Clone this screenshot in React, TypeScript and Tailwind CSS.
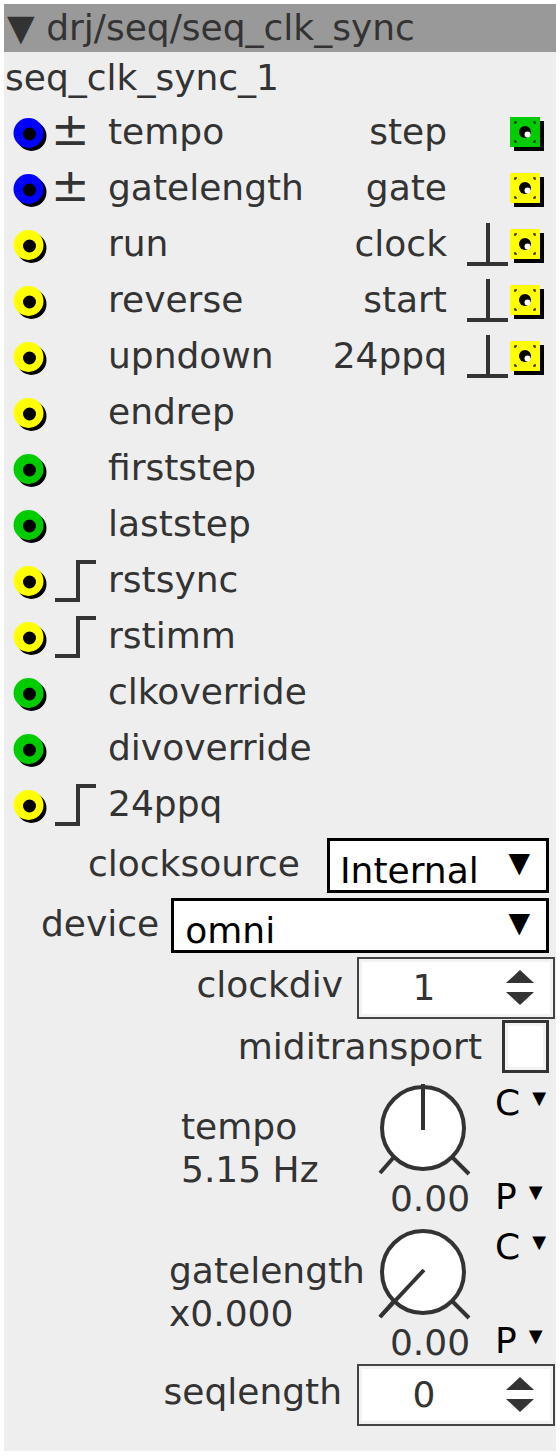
import React from 'react';

const FONT = { fontFamily: '"DejaVu Sans", "Liberation Sans", sans-serif' };

type Color = 'blue' | 'yellow' | 'green';
const fills: Record<Color, string> = { blue: '#0000ff', yellow: '#ffff00', green: '#00cc00' };

function Jack({ color }: { color: Color }) {
    return (
        <svg width="38" height="56" viewBox="0 0 38 56" className="shrink-0">
            <circle cx="19.5" cy="32" r="15" fill="#000" />
            <circle cx="16.5" cy="29" r="15" fill={fills[color]} />
            <circle cx="17.5" cy="30" r="6.5" fill="#000" />
        </svg>
    );
}

function Outlet({ color }: { color: Color }) {
    const c = '#333';
    return (
        <svg width="38" height="56" viewBox="0 0 38 56" className="shrink-0">
            <rect x="6" y="17" width="30" height="30" fill="#000" />
            <rect x="2" y="13" width="30" height="30" fill={fills[color]} />
            <path d="M7 20 v-2 h2 M25 18 h2 v2 M27 36 v2 h-2 M9 38 h-2 v-2" stroke={c} strokeWidth="1.5" fill="none" />
            <circle cx="17" cy="28" r="6" fill="#000" />
            <circle cx="19.5" cy="30.5" r="3" fill="#fff" />
        </svg>
    );
}

function StepIcon() {
    return (
        <svg width="58" height="56" viewBox="0 0 58 56" className="shrink-0">
            <path d="M5 48 H28 V10 H46" stroke="#333" strokeWidth="4" fill="none" />
        </svg>
    );
}

function EdgeIcon() {
    return (
        <svg width="63" height="56" viewBox="0 0 63 56" className="shrink-0">
            <path d="M41 7 V48 M20 48 H61" stroke="#333" strokeWidth="4" fill="none" />
        </svg>
    );
}

type Inlet = { color: Color; sym?: 'pm' | 'step'; label: string };
type Out = { color: Color; edge?: boolean; label: string };

const inlets: Inlet[] = [
    { color: 'blue', sym: 'pm', label: 'tempo' },
    { color: 'blue', sym: 'pm', label: 'gatelength' },
    { color: 'yellow', label: 'run' },
    { color: 'yellow', label: 'reverse' },
    { color: 'yellow', label: 'upndown' },
    { color: 'yellow', label: 'endrep' },
    { color: 'green', label: 'firststep' },
    { color: 'green', label: 'laststep' },
    { color: 'yellow', sym: 'step', label: 'rstsync' },
    { color: 'yellow', sym: 'step', label: 'rstimm' },
    { color: 'green', label: 'clkoverride' },
    { color: 'green', label: 'divoverride' },
    { color: 'yellow', sym: 'step', label: '24ppq' },
];

const outlets: Out[] = [
    { color: 'green', label: 'step' },
    { color: 'yellow', label: 'gate' },
    { color: 'yellow', edge: true, label: 'clock' },
    { color: 'yellow', edge: true, label: 'start' },
    { color: 'yellow', edge: true, label: '24ppq' },
];

function Spinner({ value }: { value: string }) {
    return (
        <div className="w-[198px] h-[62px] border-2 border-[#444] bg-[#f2f2f2] p-[3px]">
            <div className="w-full h-full bg-white flex items-center">
                <span className="w-[124px] text-center text-[36px] leading-none text-[#333]">{value}</span>
                <svg width="40" height="44" viewBox="0 0 40 44" className="ml-[14px]">
                    <path d="M6 17 L20 4 L34 17 Z" fill="#333" />
                    <path d="M6 26 L20 39 L34 26 Z" fill="#333" />
                </svg>
            </div>
        </div>
    );
}

function Knob({ angle }: { angle: 'top' | 'min' }) {
    return (
        <svg width="100" height="110" viewBox="0 0 100 110">
            <circle cx="50" cy="55" r="41" fill="#fff" stroke="#333" strokeWidth="4" />
            <path d="M21 84 L7 100 M79 84 L96 101" stroke="#333" strokeWidth="4" fill="none" />
            {angle === 'top' ? (
                <path d="M50 57 V11" stroke="#333" strokeWidth="4" />
            ) : (
                <path d="M51 53 L7 100" stroke="#333" strokeWidth="4" />
            )}
        </svg>
    );
}

function KnobBlock({ label, value, ml, angle }: { label: string; value: string; ml: string; angle: 'top' | 'min' }) {
    return (
        <div className="flex h-[144px]">
            <div className={`${ml} pt-[32px] text-[36px] leading-[43px] text-[#333] w-[190px]`}>
                <div>{label}</div>
                <div>{value}</div>
            </div>
            <div className="flex-1" />
            <div className="flex flex-col items-center w-[100px]">
                <Knob angle={angle} />
                <span className="text-[36px] leading-[32px] text-[#333] ml-[14px]">0.00</span>
            </div>
            <div className="w-[59px] pl-[22px] flex flex-col text-black">
                <div className="mt-[10px] h-[40px] flex items-center">
                    <span className="text-[36px] leading-none">C</span>
                    <span className="text-[18px] leading-none ml-[12px] -mt-[10px]">▼</span>
                </div>
                <div className="mt-[55px] h-[40px] flex items-center">
                    <span className="text-[36px] leading-none">P</span>
                    <span className="text-[18px] leading-none ml-[12px] -mt-[10px]">▼</span>
                </div>
            </div>
            <div className="w-[24px]" />
        </div>
    );
}

export default function App() {
    return (
        <div className="w-[560px] h-[1456px] bg-white p-[4px]" style={FONT}>
            <div className="w-[552px] h-[1447px] bg-[#eeeeee] flex flex-col">
                {/* header */}
                <div className="h-[48px] bg-[#999999] text-[#333] text-[36px] leading-[48px] pl-[3px] whitespace-nowrap">
                    ▼ drj/seq/seq_clk_sync
                </div>
                <div className="h-[52px] text-[#333] text-[36px] leading-[52px] pl-[1px]">seq_clk_sync_1</div>

                {/* ports */}
                {inlets.map((inl, i) => {
                    const out = outlets[i];
                    return (
                        <div key={i} className="flex h-[56px] items-center text-[36px] leading-[56px] text-[#333]">
                            <div className="w-[8px]" />
                            <Jack color={inl.color} />
                            <div className="w-[58px] h-[56px] flex items-center">
                                {inl.sym === 'pm' && <span className="ml-[1px] text-[46px] leading-[56px] -mt-[6px]">±</span>}
                                {inl.sym === 'step' && <StepIcon />}
                            </div>
                            <span className="whitespace-nowrap">{inl.label}</span>
                            <div className="flex-1" />
                            {out && (
                                <>
                                    <span className="whitespace-nowrap">{out.label}</span>
                                    <div className="w-[61px] h-[56px]">{out.edge && <EdgeIcon />}</div>
                                    <Outlet color={out.color} />
                                    <div className="w-[10px]" />
                                </>
                            )}
                        </div>
                    );
                })}

                {/* attributes */}
                <div className="flex items-center justify-end mt-[6px] h-[55px] pr-[7px]">
                    <span className="text-[36px] text-[#333] leading-none -mt-[4px]">clocksource</span>
                    <div className="ml-[27px] w-[222px] h-[55px] border-[3px] border-black bg-white flex items-center justify-between pl-[10px] pr-[16px]">
                        <span className="text-[36px] text-black leading-none mt-[10px]">Internal</span>
                        <span className="text-[28px] text-black leading-none -mt-[6px]">▼</span>
                    </div>
                </div>
                <div className="flex items-center mt-[5px] h-[55px] pr-[7px]">
                    <span className="ml-[37px] text-[36px] text-[#333] leading-none -mt-[4px]">device</span>
                    <div className="ml-[12px] flex-1 h-[55px] border-[3px] border-black bg-white flex items-center justify-between pl-[11px] pr-[16px]">
                        <span className="text-[36px] text-black leading-none mt-[10px]">omni</span>
                        <span className="text-[28px] text-black leading-none -mt-[6px]">▼</span>
                    </div>
                </div>
                <div className="flex items-center justify-end mt-[4px] h-[62px] pr-[1px]">
                    <span className="text-[36px] text-[#333] leading-none -mt-[6px] mr-[14px]">clockdiv</span>
                    <Spinner value="1" />
                </div>
                <div className="flex items-center justify-end mt-[1px] h-[53px] pr-[7px]">
                    <span className="text-[36px] text-[#333] leading-none mr-[20px]">miditransport</span>
                    <div className="w-[47px] h-[53px] border-[3px] border-[#333] bg-[#f2f2f2] p-[3px]">
                        <div className="w-full h-full bg-white" />
                    </div>
                </div>

                {/* knobs */}
                <KnobBlock label="tempo" value="5.15 Hz" ml="ml-[177px]" angle="top" />
                <KnobBlock label="gatelength" value="x0.000" ml="ml-[165px]" angle="min" />

                <div className="flex items-center justify-end mt-[3px] h-[62px] pr-[1px]">
                    <span className="text-[36px] text-[#333] leading-none -mt-[6px] mr-[15px]">seqlength</span>
                    <Spinner value="0" />
                </div>
            </div>
        </div>
    );
}
